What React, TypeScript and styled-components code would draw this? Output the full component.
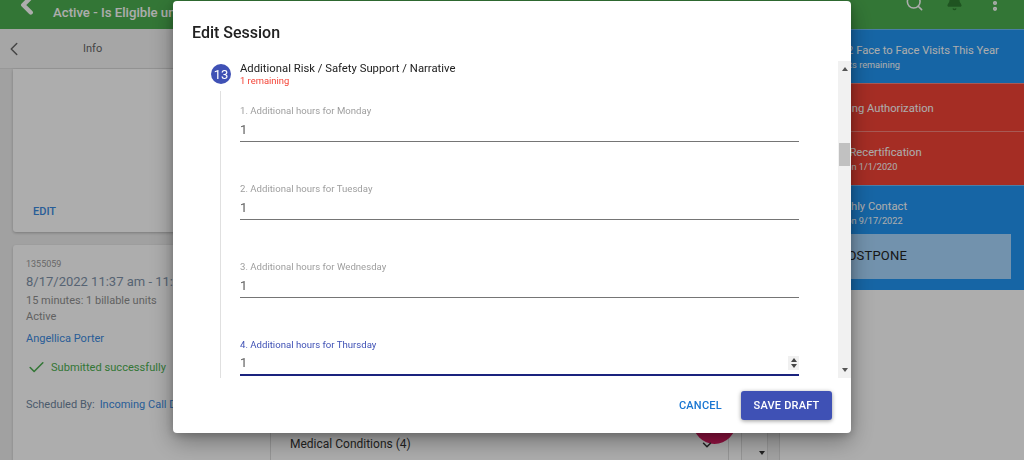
import React from 'react';
import styled, { createGlobalStyle } from 'styled-components';
import { ChevronLeft, Search, Bell, MoreVertical, Check, ChevronDown } from 'lucide-react';

const GlobalStyle = createGlobalStyle`
  html, body {
    margin: 0;
    padding: 0;
    width: 1024px;
    height: 460px;
    overflow: hidden;
    background: #fff;
    font-family: Roboto, 'Liberation Sans', sans-serif;
  }
  * {
    box-sizing: border-box;
  }
`;

const questions = [
  { id: 1, label: '1. Additional hours for Monday' },
  { id: 2, label: '2. Additional hours for Tuesday' },
  { id: 3, label: '3. Additional hours for Wednesday' },
  { id: 4, label: '4. Additional hours for Thursday', focused: true },
];

const App = () => {
  return (
    <>
      <GlobalStyle />
      <Page>
        <AppBar>
          <BackButton>
            <ChevronLeft size={30} strokeWidth={3.5} />
          </BackButton>
          <AppTitle>Active - Is Eligible until 12/31/2022</AppTitle>
          <AppActions>
            <Search size={19} strokeWidth={2} />
            <BellIcon>
              <Bell size={17} fill="currentColor" strokeWidth={2} />
            </BellIcon>
            <MoreVertical size={20} strokeWidth={3} />
          </AppActions>
        </AppBar>
        <Body>
          <LeftColumn>
            <InfoHeader>
              <ChevronLeft size={22} strokeWidth={1.6} />
              <InfoTitle>Info</InfoTitle>
            </InfoHeader>
            <CardStack>
              <InfoCard>
                <EditLink>EDIT</EditLink>
              </InfoCard>
              <SessionCard>
                <SessionId>1355059</SessionId>
                <SessionTime>8/17/2022 11:37 am - 11:52 am</SessionTime>
                <SessionMeta>15 minutes: 1 billable units</SessionMeta>
                <SessionMeta>Active</SessionMeta>
                <SessionLink>Angellica Porter</SessionLink>
                <SubmittedRow>
                  <Check size={19} strokeWidth={2} />
                  <span>Submitted successfully</span>
                </SubmittedRow>
                <ScheduledRow>
                  <span>Scheduled By:</span>
                  <ScheduledName>Incoming Call Dept</ScheduledName>
                </ScheduledRow>
              </SessionCard>
            </CardStack>
          </LeftColumn>
          <MiddleColumn>
            <MedicalPanel>
              <MedicalRow>
                <span>Medical Conditions (4)</span>
                <Fab />
                <MedicalChevron>
                  <ChevronDown size={14} strokeWidth={2.5} />
                </MedicalChevron>
              </MedicalRow>
              <MedicalGap />
              <MedicalScroll>
                <ArrowDown $color="#333" />
              </MedicalScroll>
              <MedicalEdge />
            </MedicalPanel>
          </MiddleColumn>
          <RightColumn>
            <Alert $tone="blue" $height={54}>
              <AlertTitle>2 of 2 Face to Face Visits This Year</AlertTitle>
              <AlertSub>0 visits remaining</AlertSub>
            </Alert>
            <Alert $tone="red" $height={48}>
              <AlertTitle>Missing Authorization</AlertTitle>
            </Alert>
            <Alert $tone="red" $height={54}>
              <AlertTitle>Late Recertification</AlertTitle>
              <AlertSub>Due on 1/1/2020</AlertSub>
            </Alert>
            <Alert $tone="blue" $height={105}>
              <AlertTitle>Monthly Contact</AlertTitle>
              <AlertSub>Due on 9/17/2022</AlertSub>
              <PostponeButton>POSTPONE</PostponeButton>
            </Alert>
          </RightColumn>
        </Body>
      </Page>
      <Backdrop />
      <Dialog>
        <DialogTitle>Edit Session</DialogTitle>
        <DialogContent>
          <ScrollArea>
            <SectionHeader>
              <StepBadge>13</StepBadge>
              <SectionText>
                <SectionName>Additional Risk / Safety Support / Narrative</SectionName>
                <SectionRemaining>1 remaining</SectionRemaining>
              </SectionText>
            </SectionHeader>
            <QuestionList>
              {questions.map((q) => (
                <Question key={q.id}>
                  <QuestionLabel $focused={q.focused}>{q.label}</QuestionLabel>
                  <QuestionInput $focused={q.focused}>
                    <span>1</span>
                    {q.focused && (
                      <Spinner>
                        <ArrowUp $color="#444" />
                        <ArrowDown $color="#444" />
                      </Spinner>
                    )}
                  </QuestionInput>
                </Question>
              ))}
            </QuestionList>
          </ScrollArea>
          <ScrollBar>
            <ArrowUp $color="#555" />
            <ScrollTrack>
              <ScrollThumb />
            </ScrollTrack>
            <ArrowDown $color="#555" />
          </ScrollBar>
        </DialogContent>
        <DialogActions>
          <CancelButton>CANCEL</CancelButton>
          <SaveButton>SAVE DRAFT</SaveButton>
        </DialogActions>
      </Dialog>
    </>
  );
};

const Page = styled.div`
  width: 1024px;
  height: 460px;
  display: flex;
  flex-direction: column;
  overflow: hidden;
`;

const AppBar = styled.div`
  height: 29px;
  flex-shrink: 0;
  background: #4caf50;
  color: #fff;
  display: flex;
  align-items: center;
`;

const BackButton = styled.div`
  width: 53px;
  display: flex;
  justify-content: center;
  margin-top: -20px;
`;

const AppTitle = styled.div`
  font-size: 13.2px;
  font-weight: 500;
  flex: 1;
  margin-top: -5px;
`;

const AppActions = styled.div`
  display: flex;
  align-items: center;
  gap: 22px;
  padding-right: 19px;
  margin-top: -24px;
`;

const BellIcon = styled.div`
  display: flex;
  color: #2e7d32;
`;

const Body = styled.div`
  flex: 1;
  display: flex;
  min-height: 0;
`;

const LeftColumn = styled.div`
  width: 270px;
  flex-shrink: 0;
  display: flex;
  flex-direction: column;
  background: #eeeeee;
`;

const InfoHeader = styled.div`
  height: 40px;
  flex-shrink: 0;
  background: #f5f5f5;
  border-bottom: 1px solid #e0e0e0;
  color: #666;
  display: flex;
  align-items: center;
  padding-left: 3px;
`;

const InfoTitle = styled.div`
  font-size: 11px;
  margin-left: 58px;
`;

const CardStack = styled.div`
  padding: 0 0 0 13px;
  display: flex;
  flex-direction: column;
  gap: 13px;
`;

const InfoCard = styled.div`
  height: 163px;
  flex-shrink: 0;
  background: #fff;
  border-radius: 0 0 3px 3px;
  box-shadow: 0 1px 3px rgba(0, 0, 0, 0.25);
  display: flex;
  align-items: flex-end;
  padding: 0 0 14px 20px;
`;

const EditLink = styled.div`
  color: #3b8ae0;
  font-size: 11px;
  font-weight: 500;
`;

const SessionCard = styled.div`
  height: 240px;
  flex-shrink: 0;
  background: #fff;
  border-radius: 3px;
  box-shadow: 0 1px 3px rgba(0, 0, 0, 0.2);
  padding: 12px 0 0 13px;
  white-space: nowrap;
  overflow: hidden;
`;

const SessionId = styled.div`
  font-size: 9px;
  color: #999;
  line-height: 14px;
`;

const SessionTime = styled.div`
  font-size: 13px;
  color: #7f93aa;
  line-height: 18px;
  margin: 2px 0;
`;

const SessionMeta = styled.div`
  font-size: 11px;
  color: #909090;
  line-height: 16px;
`;

const SessionLink = styled.div`
  font-size: 11px;
  color: #3b8ae0;
  line-height: 16px;
  margin-top: 6px;
`;

const SubmittedRow = styled.div`
  display: flex;
  align-items: center;
  height: 20px;
  gap: 5px;
  font-size: 11.1px;
  color: #4caf50;
  margin-top: 10px;
  margin-left: 1px;
`;

const ScheduledRow = styled.div`
  display: flex;
  gap: 5px;
  font-size: 11px;
  color: #6f86a0;
  margin-top: 21px;
`;

const ScheduledName = styled.span`
  color: #3b8ae0;
`;

const MiddleColumn = styled.div`
  width: 510px;
  flex-shrink: 0;
  display: flex;
  flex-direction: column;
  justify-content: flex-end;
`;

const MedicalPanel = styled.div`
  height: 60px;
  display: flex;
`;

const MedicalRow = styled.div`
  width: 459px;
  background: #fff;
  border-left: 1px solid #ddd;
  border-right: 1px solid #ddd;
  position: relative;
  padding: 37px 0 0 19px;
  font-size: 12px;
  color: #333;
`;

const MedicalGap = styled.div`
  width: 13px;
  border-right: 1px solid #ddd;
`;

const Fab = styled.div`
  position: absolute;
  left: 422px;
  top: 0;
  width: 43px;
  height: 44px;
  border-radius: 50%;
  background: #d81b60;
`;

const MedicalChevron = styled.div`
  position: absolute;
  left: 429px;
  top: 38px;
  color: #333;
`;

const MedicalScroll = styled.div`
  width: 25px;
  background: #fafafa;
  display: flex;
  justify-content: flex-end;
  align-items: flex-end;
  padding: 0 2px 5px 0;
`;

const MedicalEdge = styled.div`
  width: 13px;
  background: #f0f0f0;
  border-left: 1px solid #ddd;
  border-right: 1px solid #ddd;
`;

const RightColumn = styled.div`
  width: 200px;
  margin-left: auto;
  display: flex;
  flex-direction: column;
`;

const Alert = styled.div<{ $tone: 'blue' | 'red'; $height: number }>`
  height: ${(p) => p.$height}px;
  background: ${(p) => (p.$tone === 'blue' ? '#2196f3' : '#f44336')};
  color: #fff;
  border-top: 1px solid rgba(255, 255, 255, 0.35);
  padding-top: 1px;
  display: flex;
  flex-direction: column;
  justify-content: center;
`;

const AlertTitle = styled.div`
  font-size: 11.2px;
  line-height: 15px;
  margin-left: 1px;
`;

const AlertSub = styled.div`
  font-size: 9.2px;
  line-height: 14px;
  margin-left: 4px;
`;

const PostponeButton = styled.div`
  margin: 6px 13px 0 0;
  height: 45px;
  flex-shrink: 0;
  background: #a9d8ff;
  color: #222;
  font-size: 13px;
  letter-spacing: 0.2px;
  display: flex;
  align-items: center;
  padding: 0 0 2px 15px;
`;

const Backdrop = styled.div`
  position: fixed;
  inset: 0;
  background: rgba(0, 0, 0, 0.32);
`;

const Dialog = styled.div`
  position: fixed;
  left: 173px;
  top: 1px;
  width: 678px;
  height: 432px;
  background: #fff;
  border-radius: 4px;
  box-shadow: 0 8px 24px rgba(0, 0, 0, 0.35), 0 2px 8px rgba(0, 0, 0, 0.2);
  display: flex;
  flex-direction: column;
`;

const DialogTitle = styled.div`
  font-size: 16px;
  font-weight: 500;
  color: #212121;
  line-height: 20px;
  padding: 22px 19px 0;
  height: 60px;
  flex-shrink: 0;
`;

const DialogContent = styled.div`
  display: flex;
  height: 317px;
  flex-shrink: 0;
`;

const ScrollArea = styled.div`
  flex: 1;
  overflow: hidden;
`;

const SectionHeader = styled.div`
  display: flex;
  align-items: flex-start;
  padding: 0 0 0 38px;
  height: 30px;
`;

const StepBadge = styled.div`
  width: 20px;
  height: 20px;
  margin-top: 3px;
  border-radius: 50%;
  background: #3f51b5;
  color: #fff;
  font-size: 13px;
  display: flex;
  align-items: center;
  justify-content: center;
`;

const SectionText = styled.div`
  margin: 1px 0 0 9px;
`;

const SectionName = styled.div`
  font-size: 11.3px;
  line-height: 13px;
  color: #212121;
`;

const SectionRemaining = styled.div`
  font-size: 9.4px;
  line-height: 12px;
  color: #f44336;
`;

const QuestionList = styled.div`
  margin-left: 47px;
  border-left: 1px solid #e0e0e0;
  padding: 0 0 0 19px;
  height: 287px;
  display: flex;
  flex-direction: column;
`;

const Question = styled.div`
  height: 78px;
  flex-shrink: 0;
  padding-top: 14px;
  width: 559px;
`;

const QuestionLabel = styled.div<{ $focused?: boolean }>`
  font-size: 9.6px;
  line-height: 12px;
  color: ${(p) => (p.$focused ? '#3f51b5' : '#9e9e9e')};
`;

const QuestionInput = styled.div<{ $focused?: boolean }>`
  height: 25px;
  font-size: 13px;
  color: #616161;
  display: flex;
  align-items: center;
  justify-content: space-between;
  border-bottom: ${(p) => (p.$focused ? '2px solid #1a237e' : '1px solid #757575')};
`;

const Spinner = styled.div`
  width: 11px;
  height: 14px;
  background: #f0f0f0;
  display: flex;
  flex-direction: column;
  align-items: center;
  justify-content: center;
  gap: 2px;
`;

const ArrowUp = styled.div<{ $color: string }>`
  width: 0;
  height: 0;
  border-left: 3.5px solid transparent;
  border-right: 3.5px solid transparent;
  border-bottom: 4px solid ${(p) => p.$color};
`;

const ArrowDown = styled.div<{ $color: string }>`
  width: 0;
  height: 0;
  border-left: 3.5px solid transparent;
  border-right: 3.5px solid transparent;
  border-top: 4px solid ${(p) => p.$color};
`;

const ScrollBar = styled.div`
  width: 13px;
  background: #f1f1f1;
  display: flex;
  flex-direction: column;
  align-items: center;
  padding: 6px 0;
  gap: 4px;
`;

const ScrollTrack = styled.div`
  flex: 1;
  width: 100%;
  padding-top: 68px;
`;

const ScrollThumb = styled.div`
  width: 11px;
  margin: 0 auto;
  height: 23px;
  background: #c1c1c1;
`;

const DialogActions = styled.div`
  flex: 1;
  display: flex;
  align-items: center;
  justify-content: flex-end;
  gap: 19px;
  padding: 0 19px 0 0;
`;

const CancelButton = styled.div`
  color: #1976d2;
  font-size: 11px;
  font-weight: 500;
  letter-spacing: 0.25px;
`;

const SaveButton = styled.div`
  width: 91px;
  height: 29px;
  background: #3f51b5;
  color: #fff;
  font-size: 11px;
  font-weight: 500;
  letter-spacing: 0.2px;
  border-radius: 3px;
  box-shadow: 0 1px 4px rgba(0, 0, 0, 0.4);
  display: flex;
  align-items: center;
  justify-content: center;
`;

export default App;
